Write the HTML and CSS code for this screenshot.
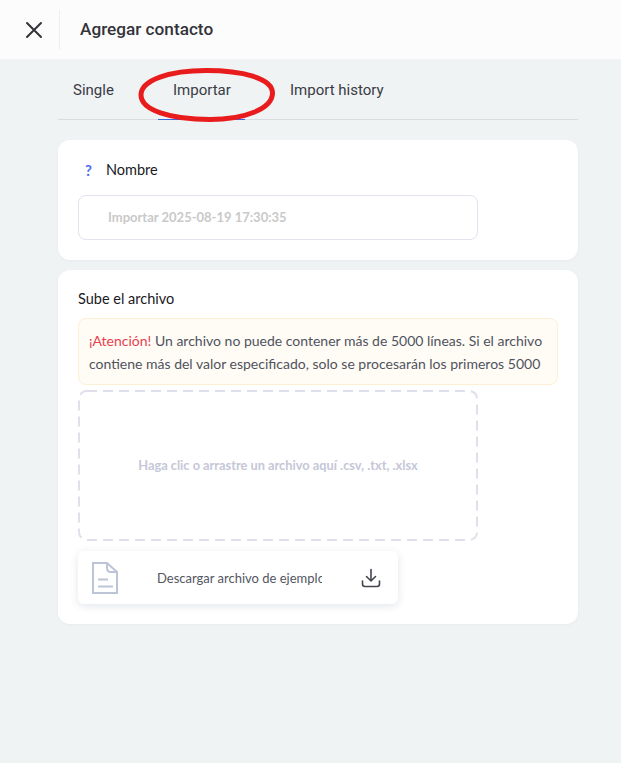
FILE: index.html
```html
<!DOCTYPE html>
<html lang="es">
<head>
<meta charset="utf-8">
<title>Agregar contacto</title>
<link rel="stylesheet" href="styles.css">
</head>
<body>
<header class="topbar">
  <button class="close" aria-label="Cerrar">
    <svg width="18" height="18" viewBox="0 0 18 18" fill="none" stroke="#333338" stroke-width="2" stroke-linecap="round"><path d="M2 2 16 16M16 2 2 16"/></svg>
  </button>
  <h1 class="title">Agregar contacto</h1>
</header>
<main class="content">
  <nav class="tabs">
    <a class="tab tab-single">Single</a>
    <a class="tab tab-active">Importar</a>
    <a class="tab tab-history">Import history</a>
    <svg class="ring" width="140" height="56" viewBox="0 0 140 56" fill="none"><path d="M3 28C3 13 32 3.500 68 3.500C104 3.500 134.500 11 134.500 26C134.500 42 106 52.500 72 52.500C32 52.500 3 43 3 28Z" stroke="#e81c1c" stroke-width="5"/></svg>
  </nav>
  <section class="card card-name">
    <div class="label-row"><span class="help">?</span><label class="label">Nombre</label></div>
    <div class="input">Importar 2025-08-19 17:30:35</div>
  </section>
  <section class="card card-file">
    <div class="label file-label">Sube el archivo</div>
    <div class="alert"><span class="alert-hot">¡Atención!</span> Un archivo no puede contener más de 5000 líneas. Si el archivo contiene más del valor especificado, solo se procesarán los primeros 5000</div>
    <div class="drop">
      <svg class="drop-border" width="400" height="151" viewBox="0 0 400 151" fill="none"><rect x="1" y="1" width="398" height="149" rx="8" stroke="#e0dfeb" stroke-width="2" stroke-dasharray="10 6"/></svg>
      Haga clic o arrastre un archivo aquí .csv, .txt, .xlsx
    </div>
    <div class="sample">
      <svg class="doc" width="26" height="32" viewBox="0 0 26 32" fill="none" stroke="#bcc5d6" stroke-width="2"><path d="M1 1H15L25 10V31H1Z"/><path d="M15 1V6Q15 10 19 10H25"/><path d="M6 17.500H16M6 24.500H21"/></svg>
      <span class="sample-name">Descargar archivo de ejemplo</span>
      <svg class="dl" width="20" height="20" viewBox="0 0 20 20" fill="none" stroke="#44464f" stroke-width="1.600" stroke-linecap="round" stroke-linejoin="round"><path d="M10 1.500V13M5.500 8.500 10 13l4.500-4.500"/><path d="M1.500 13v3a2.500 2.500 0 0 0 2.500 2.500h12a2.500 2.500 0 0 0 2.500-2.500v-3"/></svg>
    </div>
  </section>
</main>
</body>
</html>
```
FILE: styles.css
```css
* { box-sizing: border-box; }
html, body { margin: 0; height: 100%; }
body {
  width: 621px;
  height: 763px;
  overflow: hidden;
  background: #eff3f4;
  font-family: "Lato", sans-serif;
}
.topbar {
  height: 59px;
  background: #fdfcfc;
  display: flex;
  align-items: center;
}
.close {
  width: 60px;
  height: 40px;
  padding: 0 0 0 25px;
  border: 0;
  border-right: 1px solid #efeeed;
  background: none;
  display: flex;
  align-items: center;
}
.title {
  margin: 0 0 2px 20px;
  font: 500 17.200px "Roboto", sans-serif;
  color: #33333a;
}
.content { padding: 0 43px 0 58px; }
.tabs {
  position: relative;
  height: 61px;
  border-bottom: 1px solid #d9dde0;
  display: flex;
  font: 400 15px "Roboto", sans-serif;
  color: #3a3b45;
}
.tab {
  height: 61px;
  padding-top: 22px;
  line-height: 18px;
}
.tab-single { width: 100px; padding-left: 15px; }
.tab-active {
  width: 87px;
  padding-left: 15px;
  border-bottom: 1px solid #3a66e0;
}
.tab-history { margin-left: 45px; }
.ring { position: absolute; left: 80px; top: 8px; }
.card {
  background: #fff;
  border-radius: 12px;
  padding: 0 20px;
  box-shadow: 0 1px 3px rgba(40, 60, 80, 0.04);
}
.card-name { height: 120px; margin-top: 20px; padding-top: 20px; }
.card-file { height: 354px; margin-top: 10px; padding-top: 20px; }
.label-row { display: flex; align-items: center; height: 20px; }
.help { width: 28px; padding-left: 7px; color: #4f6cf2; font-size: 15px; font-weight: 700; }
.label { font-size: 14.500px; color: #1a1a1f; line-height: 20px; }
.input {
  width: 400px;
  height: 45px;
  margin-top: 15px;
  padding-left: 29px;
  border: 1px solid #e3e1ee;
  border-radius: 8px;
  font-size: 13px;
  line-height: 43px;
  color: #c9c9c9;
  font-weight: 700;
}
.file-label { height: 18px; line-height: 18px; }
.alert {
  width: 480px;
  height: 67px;
  margin-top: 10px;
  padding: 10px;
  background: #fffcf5;
  border: 1px solid #fdf0d2;
  border-radius: 8px;
  font-size: 14px;
  line-height: 23px;
  color: #4f535e;
}
.alert-hot { color: #e8404f; }
.drop {
  position: relative;
  width: 400px;
  height: 151px;
  margin-top: 5px;
  padding-bottom: 2px;
  display: flex;
  align-items: center;
  justify-content: center;
  font-size: 12.800px;
  font-weight: 700;
  color: #c5c7d8;
}
.drop-border { position: absolute; left: 0; top: 0; }
.sample {
  width: 320px;
  height: 53px;
  margin-top: 10px;
  background: #fff;
  border-radius: 6px;
  box-shadow: 0 2px 8px rgba(60, 70, 100, 0.14);
  display: flex;
  align-items: center;
  padding-left: 14px;
}
.sample-name {
  width: 165px;
  margin-left: 39px;
  overflow: hidden;
  white-space: nowrap;
  font-size: 13px;
  color: #53565f;
}
.dl { margin-left: 39px; }
```
